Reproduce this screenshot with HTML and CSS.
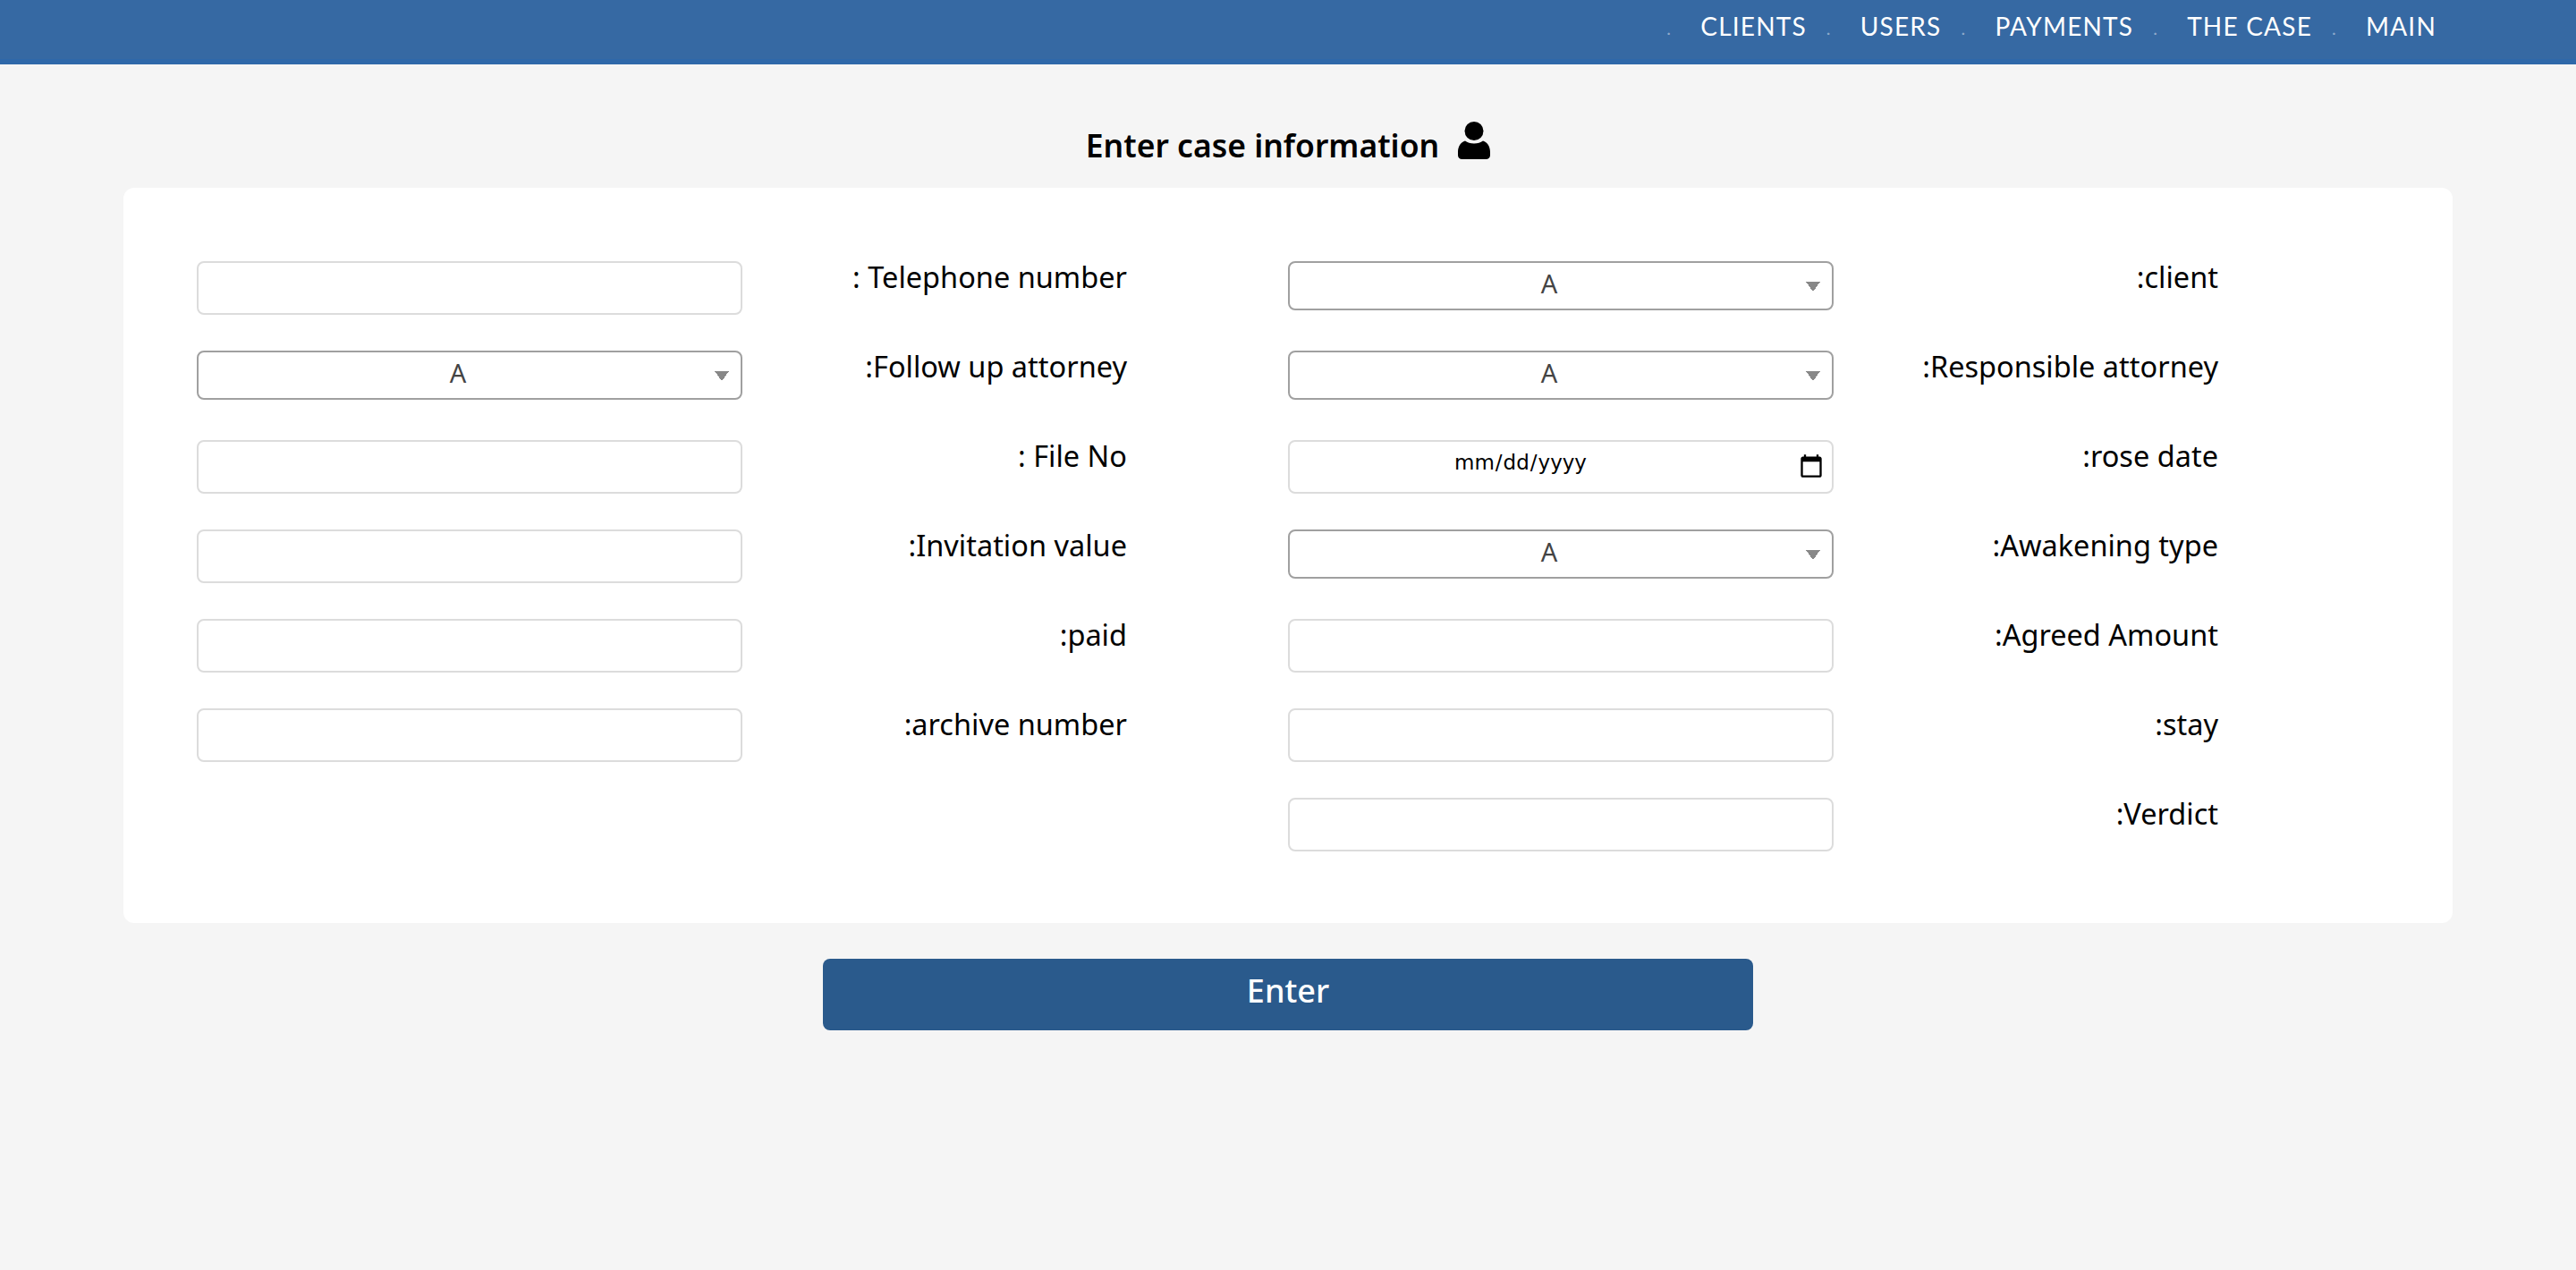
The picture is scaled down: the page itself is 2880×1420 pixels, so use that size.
FILE: index.html
```html
<!DOCTYPE html>
<html lang="en">
<head>
  <meta charset="UTF-8">
  <title>Enter case information</title>
  <link rel="stylesheet" href="styles.css">
</head>
<body>
  <nav class="topbar">
    <a class="navlink" href="#">CLIENTS</a>
    <a class="navlink" href="#">USERS</a>
    <a class="navlink" href="#">PAYMENTS</a>
    <a class="navlink" href="#">THE CASE</a>
    <a class="navlink" href="#">MAIN</a>
  </nav>

  <h1 class="title">Enter case information
    <svg class="title-icon" viewBox="0 0 36 42" aria-hidden="true">
      <circle cx="18" cy="10.500" r="10.500"/>
      <path d="M8 21.500c2.600 2 6 3 10 3s7.400-1 10-3c5 1.600 8 6.500 8 12.500v3.500c0 2.800-2 4.500-4.500 4.500h-27C2 42 0 40.300 0 37.500V34c0-6 3-10.900 8-12.500z"/>
    </svg>
  </h1>

  <form class="card">
    <div class="field"><input class="box" type="text"><label class="lbl">: Telephone number</label></div>
    <div class="field"><select class="box pick"><option>A</option></select><label class="lbl">:client</label></div>

    <div class="field"><select class="box pick"><option>A</option></select><label class="lbl">:Follow up attorney</label></div>
    <div class="field"><select class="box pick"><option>A</option></select><label class="lbl">:Responsible attorney</label></div>

    <div class="field"><input class="box" type="text"><label class="lbl">: File No</label></div>
    <div class="field"><input class="box datebox" type="date"><label class="lbl">:rose date</label></div>

    <div class="field"><input class="box" type="text"><label class="lbl">:Invitation value</label></div>
    <div class="field"><select class="box pick"><option>A</option></select><label class="lbl">:Awakening type</label></div>

    <div class="field"><input class="box" type="text"><label class="lbl">:paid</label></div>
    <div class="field"><input class="box" type="text"><label class="lbl">:Agreed Amount</label></div>

    <div class="field"><input class="box" type="text"><label class="lbl">:archive number</label></div>
    <div class="field"><input class="box" type="text"><label class="lbl">:stay</label></div>

    <div class="field"></div>
    <div class="field"><input class="box" type="text"><label class="lbl">:Verdict</label></div>
  </form>

  <div class="actions">
    <button class="enter" type="button">Enter</button>
  </div>
</body>
</html>
```
FILE: styles.css
```css
* {
  box-sizing: border-box;
  font-family: "Noto Sans", "DejaVu Sans", sans-serif;
}

body {
  margin: 0;
  min-height: 1420px;
  background-color: #f5f5f5;
  color: #000;
}

/* top bar */
.topbar {
  display: flex;
  justify-content: flex-end;
  gap: 60px;
  height: 72px;
  padding: 11px 156px 0 0;
  background-color: #3669a3;
  border-bottom: 6px solid #2f68a9;
}

.navlink {
  position: relative;
  color: #fff;
  font-family: "Lato", sans-serif;
  font-size: 28px;
  line-height: 36px;
  letter-spacing: 1.200px;
  text-decoration: none;
}

.navlink::before {
  content: ".";
  position: absolute;
  left: -38px;
  top: 2px;
  color: rgba(255, 255, 255, 0.45);
  font-size: 20px;
}

.title {
  display: flex;
  justify-content: center;
  align-items: center;
  gap: 21px;
  height: 138px;
  margin: 0;
  padding-top: 41px;
  font-size: 35.500px;
  font-weight: 600;
}

.title-icon {
  width: 36px;
  height: 42px;
  margin-top: -10px;
}

/* form */
.card {
  display: grid;
  grid-template-columns: 1220px 1220px;
  grid-auto-rows: 60px;
  row-gap: 40px;
  width: 2604px;
  margin: 0 auto;
  padding: 82px 82px 80px;
  background-color: #fff;
  border-radius: 12px;
}

.field {
  display: grid;
  grid-template-columns: 610px 430px;
  align-items: start;
}

.box {
  width: 610px;
  height: 60px;
  background-color: #fff;
  border: 2px solid #dcdcdc;
  border-radius: 8px;
  outline: none;
}

.pick {
  height: 55px;
  padding: 0 26px 6px 0;
  appearance: none;
  border-color: #a0a0a0;
  color: #444;
  font-size: 29px;
  text-align: center;
  background-image: linear-gradient(to top right, transparent 50%, #888 50%), linear-gradient(to top left, transparent 50%, #888 50%);
  background-size: 8px 11px;
  background-position: right 21px top 21px, right 13px top 21px;
  background-repeat: no-repeat;
}

.datebox {
  padding: 0 8px 10px 0;
  font-family: "DejaVu Sans", sans-serif;
  font-size: 23px;
  text-align: center;
}

.datebox::-webkit-calendar-picker-indicator {
  width: 30px;
  height: 30px;
  margin: 10px 0 0 52px;
  padding: 0;
}

.lbl {
  font-size: 32.500px;
  line-height: 40px;
  text-align: right;
  margin-top: -2px;
}

/* submit */
.actions {
  display: flex;
  justify-content: center;
  padding-top: 40px;
}

.enter {
  width: 1040px;
  height: 80px;
  padding: 0 0 10px;
  background-color: #2a5a8c;
  border: none;
  border-radius: 8px;
  color: #fff;
  font-size: 36px;
  font-weight: 500;
}
```
